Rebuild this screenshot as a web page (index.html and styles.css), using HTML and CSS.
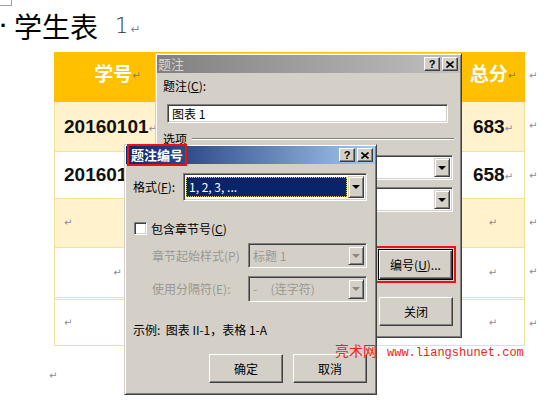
FILE: index.html
```html
<!DOCTYPE html>
<html lang="zh">
<head>
<meta charset="utf-8">
<link rel="stylesheet" href="styles.css">
</head>
<body>
<div class="page">
  <span class="cropmark"></span>
  <h1 class="title"><span class="dot">·</span><span class="hz">学生表</span><span class="num">1</span><span class="pm big">↵</span></h1>

  <div class="tbl">
    <div class="c hd first center"><span>学号</span><span class="pm">↵</span></div>
    <div class="c hd"></div>
    <div class="c hd"></div>
    <div class="c hd last center"><span>总分</span><span class="pm">↵</span></div>
    <div class="m"><span class="pm">↵</span></div>

    <div class="c y first"><span class="num-b">20160101</span><span class="pm">↵</span></div>
    <div class="c y"></div>
    <div class="c y"></div>
    <div class="c y last center"><span class="num-b">683</span><span class="pm">↵</span></div>
    <div class="m"><span class="pm">↵</span></div>

    <div class="c w first"><span class="num-b">20160102</span><span class="pm">↵</span></div>
    <div class="c w"></div>
    <div class="c w"></div>
    <div class="c w last center"><span class="num-b">658</span><span class="pm">↵</span></div>
    <div class="m"><span class="pm">↵</span></div>

    <div class="c y first"><span class="pm">↵</span></div>
    <div class="c y"></div>
    <div class="c y"></div>
    <div class="c y last center"><span class="pm">↵</span></div>
    <div class="m"><span class="pm">↵</span></div>

    <div class="c w first center dbl"><span class="pm">↵</span></div>
    <div class="c w dbl"></div>
    <div class="c w dbl"></div>
    <div class="c w last center dbl"><span class="pm">↵</span></div>
    <div class="m"><span class="pm">↵</span></div>

    <div class="c w first"><span class="pm">↵</span></div>
    <div class="c w"></div>
    <div class="c w"></div>
    <div class="c w last center"><span class="pm">↵</span></div>
    <div class="m"><span class="pm">↵</span></div>
  </div>
  <div class="after"><span class="pm">↵</span></div>

  <!-- 题注 dialog (inactive) -->
  <div class="dlg dlg1">
    <div class="tbar">
      <span class="ttl">题注</span>
      <span class="tbtns">
        <span class="tb">?</span>
        <span class="tb"><svg width="8" height="7" viewBox="0 0 8 7"><path d="M0.5 0.5 L7.5 6.5 M7.5 0.5 L0.5 6.5" stroke="#000" stroke-width="1.6"/></svg></span>
      </span>
    </div>
    <div class="body1">
      <div class="lbl">题注(<span class="ul">C</span>):</div>
      <div class="input">图表 1</div>
      <div class="group"><span>选项</span><span class="rule"></span></div>
      <div class="rcol">
        <div class="combo c1"><span class="field"></span><span class="dd"><span class="arr"></span></span></div>
        <div class="combo c2"><span class="field"></span><span class="dd"><span class="arr"></span></span></div>
        <div class="btn default bnum">编号(<span class="ul">U</span>)...</div>
        <div class="btn bclose">关闭</div>
      </div>
    </div>
  </div>

  <!-- 题注编号 dialog (active) -->
  <div class="dlg dlg2">
    <div class="tbar">
      <span class="ttl hl">题注编号</span>
      <span class="tbtns">
        <span class="tb">?</span>
        <span class="tb"><svg width="8" height="7" viewBox="0 0 8 7"><path d="M0.5 0.5 L7.5 6.5 M7.5 0.5 L0.5 6.5" stroke="#000" stroke-width="1.6"/></svg></span>
      </span>
    </div>
    <div class="body2">
      <div class="row fmt">
        <span class="flbl">格式(<span class="ul">F</span>):</span>
        <div class="combo cfmt"><span class="field sel"><span class="focus">1, 2, 3, ...</span></span><span class="dd"><span class="arr"></span></span></div>
      </div>
      <div class="row chk">
        <span class="box"></span><span>包含章节号(<span class="ul">C</span>)</span>
      </div>
      <div class="row sub r1">
        <span class="dis">章节起始样式(P)</span>
        <div class="combo off"><span class="field">标题 1</span><span class="dd"><span class="arr"></span></span></div>
      </div>
      <div class="row sub r2">
        <span class="dis">使用分隔符(E):</span>
        <div class="combo off"><span class="field">-&nbsp;&nbsp;&nbsp;&nbsp;&nbsp;(连字符)</span><span class="dd"><span class="arr"></span></span></div>
      </div>
      <div class="example">示例:&nbsp; 图表 II-1，表格 1-A</div>
      <div class="btns">
        <div class="btn">确定</div>
        <div class="btn">取消</div>
      </div>
    </div>
  </div>

  <div class="watermark"><span class="wm-cn">亮术网</span><span class="wm-url">www.liangshunet.com</span></div>
</div>
</body>
</html>
```

FILE: styles.css
```css
* { box-sizing: border-box; }
body {
  margin: 0;
  background: #fff;
  font-family: "Noto Sans CJK SC", "Liberation Sans", sans-serif;
}
.page {
  position: relative;
  width: 552px;
  height: 400px;
  overflow: hidden;
}
.cropmark {
  position: absolute;
  left: 0;
  top: 0;
  width: 12px;
  height: 6px;
  border-right: 1px solid #a0a0a0;
  border-bottom: 1px solid #a0a0a0;
}
.title {
  margin: 0;
  height: 52px;
  display: flex;
  align-items: center;
  font-size: 28px;
  font-weight: normal;
  color: #000;
  line-height: 1;
}
.title .dot {
  width: 14px;
  font-family: "Liberation Sans", sans-serif;
  font-size: 22px;
  font-weight: bold;
  text-align: left;
}
.title .num {
  margin-left: 17px;
  font-family: "DejaVu Sans", sans-serif;
  font-weight: 200;
  font-size: 21px;
  color: #333;
}
.ul { text-decoration: underline; }
.pm {
  font-family: "DejaVu Sans", sans-serif;
  font-size: 10px;
  color: #8a8a9c;
  font-weight: normal;
  line-height: 1;
}
.pm.big { font-size: 12px; margin-left: 2px; margin-top: 6px; }

/* table */
.tbl {
  display: grid;
  grid-template-columns: 126px 130px 152px 63px 27px;
  grid-template-rows: 50px 50px 47px 49px 52px 46px;
  margin-left: 54px;
}
.c {
  display: flex;
  align-items: center;
  padding-left: 9px;
  border-bottom: 1px solid #f3e296;
}
.c.center { justify-content: center; padding-left: 0; }
.c.first { border-left: 1px solid #f3e296; }
.c.last { border-right: 1px solid #f3e296; }
.c.hd {
  background: #ffc000;
  border-color: #ffc000;
  color: #fff;
  font-weight: bold;
  font-size: 19px;
  padding-bottom: 8px;
}
.c.hd .pm { color: #8a6a9a; margin-top: 6px; }
.c.y { background: #fff2cc; }
.c.w { background: #fff; }
.c.dbl { border-bottom: 3px double #f3e296; }
.num-b {
  font-family: "Liberation Sans", sans-serif;
  font-weight: bold;
  font-size: 19px;
  color: #111;
}
.c .num-b + .pm { margin-top: 4px; }
.m {
  padding-left: 4px;
  padding-top: 8px;
}
.after {
  margin-left: 49px;
  margin-top: 18px;
  line-height: 16px;
}

/* dialogs */
.dlg {
  position: absolute;
  background: #d4d0c8;
  border: 1px solid;
  border-color: #d4d0c8 #404040 #404040 #d4d0c8;
  box-shadow: inset 1px 1px #fff, inset -1px -1px #808080;
  padding: 1px;
  font-size: 12px;
  color: #000;
  line-height: 16px;
}
.dlg1 { left: 155px; top: 53px; width: 307px; height: 285px; }
.dlg2 { left: 124px; top: 144px; width: 253px; height: 251px; }
.tbar {
  height: 18px;
  display: flex;
  align-items: center;
  justify-content: space-between;
  padding: 0 2px 0 1px;
}
.dlg1 .tbar {
  background: linear-gradient(90deg, #808080, #c0c0c0);
  color: #d8d4cc;
  font-size: 13px;
}
.dlg2 .tbar {
  background: linear-gradient(90deg, #0a246a, #a6caf0);
  color: #fff;
  font-weight: bold;
  font-size: 13px;
}
.ttl { line-height: 18px; height: 18px; }
.hl {
  padding: 0 2px;
  margin-left: 2px;
  outline: 2px solid #f01010;
}
.tbtns { display: flex; gap: 2px; }
.tb {
  width: 16px;
  height: 14px;
  background: #d4d0c8;
  border: 1px solid;
  border-color: #fff #404040 #404040 #fff;
  box-shadow: inset -1px -1px #808080;
  display: flex;
  align-items: center;
  justify-content: center;
  font-family: "Liberation Sans", sans-serif;
  font-weight: bold;
  font-size: 11px;
  color: #000;
  line-height: 1;
}

/* dialog 1 body */
.body1 { padding: 5px 6px 0 6px; }
.input {
  margin-top: 10px;
  margin-left: 4px;
  width: 281px;
  height: 19px;
  background: #fff;
  border: 1px solid;
  border-color: #808080 #fff #fff #808080;
  box-shadow: inset 1px 1px #404040, inset -1px -1px #d4d0c8;
  padding: 0 4px;
  line-height: 17px;
}
.group {
  margin-top: 8px;
  display: flex;
  align-items: center;
}
.group .rule {
  flex: 1;
  margin-left: 5px;
  border-top: 1px solid #808080;
  border-bottom: 1px solid #fff;
}
.rcol {
  display: flex;
  flex-direction: column;
  align-items: flex-end;
  padding-right: 1px;
}
.combo {
  display: flex;
  background: #fff;
  border: 1px solid;
  border-color: #808080 #fff #fff #808080;
  box-shadow: inset 1px 1px #404040, inset -1px -1px #d4d0c8;
  padding: 2px;
}
.combo .field {
  flex: 1;
  display: flex;
  align-items: center;
  padding-left: 2px;
  white-space: pre;
}
.combo .dd {
  width: 16px;
  background: #d4d0c8;
  border: 1px solid;
  border-color: #d4d0c8 #404040 #404040 #d4d0c8;
  box-shadow: inset 1px 1px #fff, inset -1px -1px #808080;
  display: flex;
  align-items: center;
  justify-content: center;
}
.arr {
  width: 0;
  height: 0;
  border-left: 4px solid transparent;
  border-right: 4px solid transparent;
  border-top: 4px solid #000;
}
.c1 { margin-top: 8px; width: 212px; height: 25px; }
.c2 { margin-top: 7px; width: 212px; height: 25px; }
.btn {
  width: 74px;
  height: 29px;
  background: #d4d0c8;
  border: 1px solid;
  border-color: #fff #404040 #404040 #fff;
  box-shadow: inset -1px -1px #808080;
  display: flex;
  align-items: center;
  justify-content: center;
  font-size: 12px;
}
.btn.default {
  border: 1px solid #000;
  box-shadow: inset 1px 1px #fff, inset -1px -1px #404040, inset -2px -2px #808080;
}
.bnum {
  margin-top: 37px;
  width: 75px;
  height: 31px;
  outline: 2px solid #f01010;
  outline-offset: 1px;
}
.bclose { margin-top: 17px; }

/* dialog 2 body */
.body2 { padding: 9px 8px 0 7px; }
.row { display: flex; align-items: center; }
.fmt { height: 28px; }
.flbl { width: 50px; white-space: nowrap; }
.cfmt { width: 184px; height: 28px; }
.field.sel { padding: 1px 1px 1px 0; }
.focus {
  flex: 1;
  align-self: stretch;
  display: flex;
  align-items: center;
  background: #0a246a;
  color: #fff;
  padding-left: 3px;
  outline: 1px dotted #d8c870;
  outline-offset: -1px;
}
.chk { margin-top: 21px; height: 13px; gap: 4px; }
.box {
  width: 13px;
  height: 13px;
  margin-left: 1px;
  background: #fff;
  border: 1px solid;
  border-color: #808080 #fff #fff #808080;
  box-shadow: inset 1px 1px #404040, inset -1px -1px #d4d0c8;
}
.sub {
  justify-content: space-between;
  padding-left: 19px;
}
.r1 { margin-top: 8px; height: 25px; }
.r2 { margin-top: 8px; height: 26px; }
.dis { color: #9a9893; }
.combo.off {
  width: 119px;
  height: 100%;
  background: #d4d0c8;
  color: #9a9893;
}
.combo.off .arr { border-top-color: #8a8883; }
.example { margin-top: 20px; }
.btns {
  margin-top: 16px;
  display: flex;
  justify-content: flex-end;
  gap: 10px;
}

.watermark {
  position: absolute;
  left: 335px;
  top: 340px;
  display: flex;
  align-items: baseline;
  color: #f42020;
}
.wm-cn { font-size: 14px; }
.wm-url {
  margin-left: 10px;
  font-family: "Liberation Mono", monospace;
  font-size: 12px;
}
```
